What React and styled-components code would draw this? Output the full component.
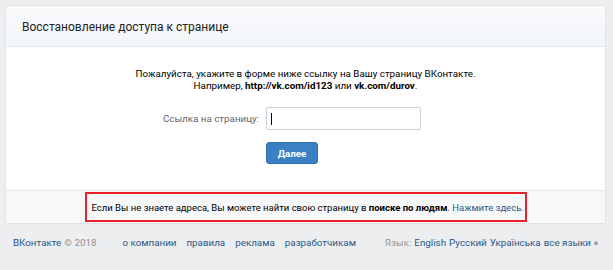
import React from "react";
import styled, { createGlobalStyle } from "styled-components";

const GlobalStyle = createGlobalStyle`
  html, body {
    margin: 0;
    padding: 0;
    background: #edeef0;
  }
  body {
    font-family: Roboto, "Open Sans", "Liberation Sans", sans-serif;
    font-size: 9.8px;
    color: #000;
  }
`;

const Page = styled.div`
  width: 613px;
  height: 270px;
  box-sizing: border-box;
  padding: 5px 7px 0 5px;
  background: #edeef0;
`;

const Card = styled.div`
  background: #fff;
  border: 1px solid #e1e3e6;
  border-radius: 2px;
`;

const Header = styled.div`
  height: 41px;
  box-sizing: border-box;
  display: flex;
  align-items: center;
  padding: 2px 16px 0;
  background: linear-gradient(#f9fafc, #f3f6f9);
  border-bottom: 1px solid #e7e8ec;
  font-size: 12px;
  color: #222;
`;

const Body = styled.div`
  display: flex;
  flex-direction: column;
  padding: 21px 0 26px;
`;

const Intro = styled.p`
  margin: 0;
  text-align: center;
  line-height: 12px;
  color: #000;

  b {
    font-weight: 700;
  }
`;

const FormRow = styled.div`
  display: flex;
  align-items: center;
  margin-top: ${(p) => p.$top}px;
`;

const Label = styled.div`
  flex: 0 0 253px;
  text-align: right;
  color: #656565;
  margin-right: 7px;
`;

const Spacer = styled.div`
  flex: 0 0 260px;
`;

const Field = styled.div`
  width: 155px;
  height: 23px;
  box-sizing: border-box;
  border: 1px solid #c5d0db;
  border-radius: 2px;
  background: #fff;
  display: flex;
  align-items: center;
  padding-left: 4px;
`;

const Caret = styled.span`
  width: 1px;
  height: 12px;
  background: #000;
`;

const Button = styled.button`
  width: 52px;
  height: 22px;
  border: 1px solid #2f6ea8;
  border-radius: 3px;
  background: #3b80c2;
  color: #fff;
  font-family: inherit;
  font-size: 9.8px;
  font-weight: 700;
  padding: 0;
`;

const Note = styled.div`
  display: flex;
  justify-content: center;
  padding: 1px 0 0;
  background: #f7f8fa;
  border-top: 1px solid #e7e8ec;
  height: 33px;
  box-sizing: border-box;
`;

const Highlight = styled.div`
  width: 442px;
  height: 30px;
  box-sizing: border-box;
  border: 2px solid #e8232c;
  display: flex;
  align-items: center;
  padding-left: 5px;
  white-space: nowrap;
  font-size: 9.5px;

  b {
    font-weight: 700;
  }
`;

const Link = styled.a`
  color: #2a5885;
  text-decoration: none;
`;

const Footer = styled.div`
  display: flex;
  align-items: center;
  padding: 13px 8px 0 8px;
  line-height: 12px;
  font-size: 9.8px;
`;

const Muted = styled.span`
  color: #939393;
`;

const Group = styled.div`
  display: flex;
  gap: ${(p) => p.$gap}px;
  margin-left: ${(p) => (p.$push ? "auto" : `${p.$offset || 0}px`)};
`;

export default function App() {
  return (
    <>
      <GlobalStyle />
      <Page>
        <Card>
          <Header>Восстановление доступа к странице</Header>
          <Body>
            <Intro>
              Пожалуйста, укажите в форме ниже ссылку на Вашу страницу ВКонтакте.
              <br />
              Например, <b>http://vk.com/id123</b> или <b>vk.com/durov</b>.
            </Intro>
            <FormRow $top={15}>
              <Label>Ссылка на страницу:</Label>
              <Field>
                <Caret />
              </Field>
            </FormRow>
            <FormRow $top={12}>
              <Spacer />
              <Button>Далее</Button>
            </FormRow>
          </Body>
          <Note>
            <Highlight>
              Если Вы не знаете адреса, Вы можете найти свою страницу в&nbsp;
              <b>поиске по людям</b>.&nbsp;<Link>Нажмите здесь.</Link>
            </Highlight>
          </Note>
        </Card>
        <Footer>
          <Group $gap={3}>
            <Link>ВКонтакте</Link>
            <Muted>© 2018</Muted>
          </Group>
          <Group $gap={10} $offset={26}>
            <Link>о компании</Link>
            <Link>правила</Link>
            <Link>реклама</Link>
            <Link>разработчикам</Link>
          </Group>
          <Group $gap={3} $push>
            <Muted>Язык:</Muted>
            <Link>English</Link>
            <Link>Русский</Link>
            <Link>Українська</Link>
            <Link>все языки »</Link>
          </Group>
        </Footer>
      </Page>
    </>
  );
}
